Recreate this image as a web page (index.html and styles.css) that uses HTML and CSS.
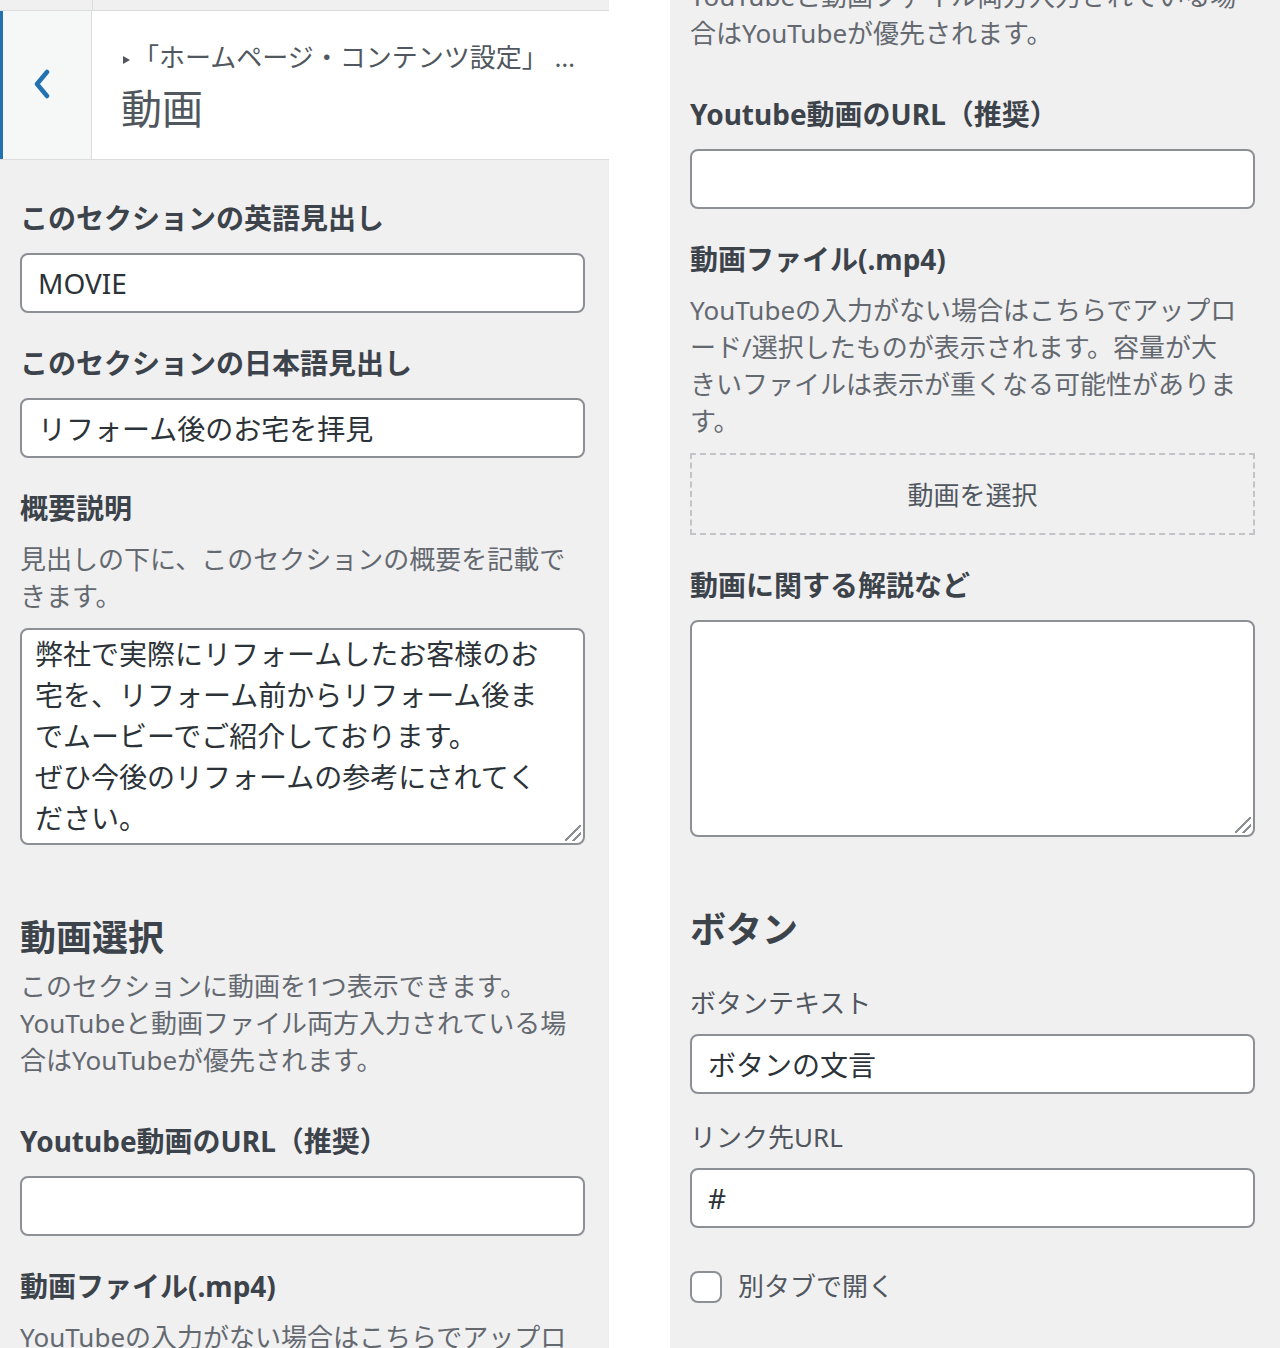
FILE: index.html
```html
<!DOCTYPE html>
<html lang="ja">
<head>
  <meta charset="utf-8">
  <meta name="viewport" content="width=device-width, initial-scale=1">
  <title>動画 - カスタマイズ</title>
  <link rel="stylesheet" href="styles.css">
</head>
<body>
  <div class="screen">
    <!-- left: top of the section -->
    <section class="panel">
      <div class="strip"><span></span></div>
      <header class="section-head">
        <button class="back" type="button" aria-label="戻る">
          <svg width="18" height="30" viewBox="0 0 18 30"><path d="M14 3L4 15L14 27" fill="none" stroke="#2271b1" stroke-width="4.5" stroke-linecap="round" stroke-linejoin="round"/></svg>
        </button>
        <div class="head-title">
          <span class="crumb"><i class="tri"></i>「ホームページ・コンテンツ設定」 …</span>
          <h2>動画</h2>
        </div>
      </header>

      <div class="controls">
        <div class="control">
          <label class="title">このセクションの英語見出し</label>
          <input class="field" type="text" value="MOVIE">
        </div>
        <div class="control">
          <label class="title">このセクションの日本語見出し</label>
          <input class="field" type="text" value="リフォーム後のお宅を拝見">
        </div>
        <div class="control">
          <label class="title">概要説明</label>
          <p class="desc">見出しの下に、このセクションの概要を記載で<br>きます。</p>
          <span class="area-wrap"><textarea class="area">弊社で実際にリフォームしたお客様のお
宅を、リフォーム前からリフォーム後ま
でムービーでご紹介しております。
ぜひ今後のリフォームの参考にされてく
ださい。</textarea></span>
        </div>

        <div class="section-intro">
          <h3>動画選択</h3>
          <p class="desc">このセクションに動画を1つ表示できます。<br>YouTubeと動画ファイル両方入力されている場<br>合はYouTubeが優先されます。</p>
        </div>

        <div class="control">
          <label class="title">Youtube動画のURL（推奨）</label>
          <input class="field" type="text" value="">
        </div>
        <div class="control">
          <label class="title">動画ファイル(.mp4)</label>
          <p class="desc">YouTubeの入力がない場合はこちらでアップロ<br>ード/選択したものが表示されます。容量が大<br>きいファイルは表示が重くなる可能性がありま<br>す。</p>
        </div>
      </div>
    </section>

    <!-- right: same section, scrolled down -->
    <section class="panel">
      <div class="controls">
        <div class="section-intro scrolled">
          <p class="desc">このセクションに動画を1つ表示できます。<br>YouTubeと動画ファイル両方入力されている場<br>合はYouTubeが優先されます。</p>
        </div>

        <div class="control">
          <label class="title">Youtube動画のURL（推奨）</label>
          <input class="field" type="text" value="">
        </div>
        <div class="control">
          <label class="title">動画ファイル(.mp4)</label>
          <p class="desc">YouTubeの入力がない場合はこちらでアップロ<br>ード/選択したものが表示されます。容量が大<br>きいファイルは表示が重くなる可能性がありま<br>す。</p>
          <button class="upload" type="button">動画を選択</button>
        </div>
        <div class="control">
          <label class="title">動画に関する解説など</label>
          <span class="area-wrap"><textarea class="area"></textarea></span>
        </div>

        <div class="section-intro">
          <h3>ボタン</h3>
        </div>

        <div class="control sub">
          <label class="sub-title">ボタンテキスト</label>
          <input class="field" type="text" value="ボタンの文言">
        </div>
        <div class="control sub">
          <label class="sub-title">リンク先URL</label>
          <input class="field" type="text" value="#">
        </div>
        <label class="check">
          <input type="checkbox">
          <span>別タブで開く</span>
        </label>
      </div>
    </section>
  </div>
</body>
</html>
```

FILE: styles.css
```css
html, body {
  margin: 0;
  height: 100%;
  overflow: hidden;
  background: #fff;
}

body, input, textarea, button {
  font-family: 'Noto Sans', 'Noto Sans CJK JP', sans-serif;
}

.screen {
  display: flex;
  gap: 61px;
  height: 1348px;
}

.panel {
  width: 609px;
  flex: none;
  background: #f0f0f1;
  overflow: hidden;
}
.panel + .panel {
  width: 610px;
}

/* header of the section */
.strip {
  height: 10px;
}
.strip span {
  display: block;
  width: 92px;
  height: 100%;
  border-right: 1px solid #dcdcde;
}

.section-head {
  display: flex;
  height: 148px;
  background: #fff;
  border-top: 1px solid #dcdcde;
  border-bottom: 1px solid #dcdcde;
}

.back {
  width: 92px;
  flex: none;
  padding: 0 0 2px;
  margin: 0;
  background: #f6f7f7;
  border: 0;
  border-left: 3px solid #2271b1;
  border-right: 1px solid #dcdcde;
  display: flex;
  align-items: center;
  justify-content: center;
}
.back svg {
  margin-right: 10px;
}

.head-title {
  padding: 27px 0 0 29px;
  color: #50575e;
}
.crumb {
  display: block;
  font-size: 26px;
  line-height: 38px;
  white-space: nowrap;
}
.tri {
  display: inline-block;
  width: 0;
  height: 0;
  border-left: 7px solid #50575e;
  border-top: 4.5px solid transparent;
  border-bottom: 4.5px solid transparent;
  margin: 0 3px 0 2px;
  vertical-align: 3px;
}
.head-title h2 {
  margin: 0;
  font-size: 41px;
  line-height: 64px;
  font-weight: 400;
  color: #50575e;
}

/* controls */
.controls {
  display: flex;
  flex-direction: column;
  align-items: flex-start;
  padding: 38px 25px 0 20px;
}
.panel + .panel .controls {
  padding-top: 0;
}

.control {
  display: flow-root;
  margin-bottom: 30px;
}
.control.sub {
  margin-bottom: 25px;
}

.title {
  display: block;
  font-size: 28px;
  line-height: 40px;
  font-weight: 700;
  color: #3c434a;
  margin-bottom: 15px;
  white-space: nowrap;
}
.sub-title {
  display: block;
  font-size: 26px;
  line-height: 37px;
  color: #50575e;
  margin-bottom: 12px;
}

.desc {
  margin: -2px 0 13px;
  font-size: 26px;
  line-height: 37px;
  color: #646970;
  white-space: nowrap;
}

.field {
  display: block;
  box-sizing: border-box;
  width: 565px;
  height: 60px;
  margin: 0;
  padding: 0 16px;
  font-size: 28px;
  color: #2c3338;
  background: #fff;
  border: 2px solid #8c8f94;
  border-radius: 8px;
  outline: none;
}

.area-wrap {
  display: block;
  position: relative;
  width: 565px;
}
/* resize grip, drawn at the 2x size of the screenshot */
.area-wrap::after {
  content: '';
  position: absolute;
  right: 4px;
  bottom: 4px;
  width: 16px;
  height: 16px;
  background: linear-gradient(135deg,
    transparent 46%, #8c8f94 46%, #8c8f94 54%, transparent 54%,
    transparent 71%, #8c8f94 71%, #8c8f94 79%, transparent 79%);
  pointer-events: none;
}

.area {
  display: block;
  box-sizing: border-box;
  width: 565px;
  height: 217px;
  margin: 0;
  padding: 4px 20px 4px 13px;
  font-size: 28px;
  line-height: 41px;
  color: #2c3338;
  background: #fff;
  border: 2px solid #8c8f94;
  border-radius: 8px;
  resize: none;
  overflow: hidden;
  outline: none;
}

.upload {
  display: block;
  box-sizing: border-box;
  width: 565px;
  height: 82px;
  margin: 0;
  background: #f0f0f1;
  border: 2px dashed #c3c4c7;
  font-size: 26px;
  color: #50575e;
}

.section-intro {
  display: flow-root;
  margin: 38px 0 30px;
}
.section-intro h3 {
  margin: 0;
  font-size: 36px;
  line-height: 50px;
  font-weight: 700;
  color: #3c434a;
}
.section-intro .desc {
  margin: 5px 0 12px;
}
.section-intro.scrolled {
  margin-top: -59px;
}
.section-intro.scrolled .desc {
  margin-top: 0;
}

.check {
  display: flex;
  align-items: center;
  gap: 16px;
  margin-top: 15px;
  font-size: 26px;
  line-height: 37px;
  color: #50575e;
}
.check input {
  appearance: none;
  margin: 0;
  width: 32px;
  height: 32px;
  box-sizing: border-box;
  background: #fff;
  border: 2px solid #8c8f94;
  border-radius: 8px;
}
```
